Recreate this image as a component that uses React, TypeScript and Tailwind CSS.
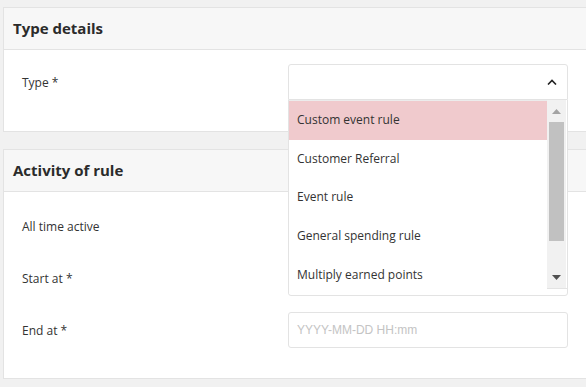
import React from 'react';

const options = [
  'Custom event rule',
  'Customer Referral',
  'Event rule',
  'General spending rule',
  'Multiply earned points',
];

const Card = ({ title, children }: { title: string; children: React.ReactNode }) => (
  <div className="w-[600px] bg-white border border-[#e3e3e3]">
    <div className="h-[42px] bg-[#f7f7f7] border-b border-[#e3e3e3] flex items-center pl-[9px]">
      <h2 className="text-[15px] font-bold text-[#2b2b2b]">{title}</h2>
    </div>
    {children}
  </div>
);

const Row = ({ label, children }: { label: string; children?: React.ReactNode }) => (
  <div className="flex items-center h-[36px]">
    <div className="w-[284px] pl-[18px] pt-[2px] text-[12px] text-[#333]">{label}</div>
    <div className="w-[280px] h-full relative">{children}</div>
  </div>
);

const Dropdown = () => (
  <div className="absolute left-0 top-[36px] z-10 w-[280px] h-[189px] bg-white border border-t-0 border-[#e3e3e3] flex">
    <ul className="flex-1 border-t border-[#ececec]">
      {options.map((o, i) => (
        <li
          key={o}
          className={
            'h-[38.6px] flex items-center pl-2 text-[12px] text-[#333] ' +
            (i === 0 ? 'bg-[#f0cacd]' : 'bg-white')
          }
        >
          {o}
        </li>
      ))}
    </ul>
    {/* scrollbar */}
    <div className="w-[19px] bg-[#f1f1f1] flex flex-col items-center mr-[1px]">
      <div className="h-[22px] flex items-center justify-center">
        <svg width="9" height="5" viewBox="0 0 9 5">
          <polygon points="0,5 4.5,0 9,5" fill="#a3a3a3" />
        </svg>
      </div>
      <div className="w-[15px] h-[119px] bg-[#c1c1c1]" />
      <div className="flex-1" />
      <div className="h-[22px] flex items-center justify-center">
        <svg width="9" height="5" viewBox="0 0 9 5">
          <polygon points="0,0 4.5,5 9,0" fill="#505050" />
        </svg>
      </div>
    </div>
  </div>
);

export default function App() {
  return (
    <div
      className="w-[586px] h-[387px] overflow-hidden bg-[#f1f1f1] pl-[3px] pt-[7px]"
      style={{ fontFamily: '"Open Sans", "Liberation Sans", sans-serif' }}
    >
      <Card title="Type details">
        <div className="pt-[14px] pb-[31px] relative z-10">
          <Row label="Type *">
            <div className="h-full border border-[#e3e3e3] rounded-t-[3px] flex items-center justify-end pr-[10px]">
              <svg width="10" height="6" viewBox="0 0 10 6">
                <polyline points="1,5.5 5,1.5 9,5.5" fill="none" stroke="#222" strokeWidth="1.6" />
              </svg>
            </div>
            <Dropdown />
          </Row>
        </div>
      </Card>

      <div className="h-[17px]" />

      <Card title="Activity of rule">
        <div className="pt-[16px] pb-[30px] flex flex-col gap-[16px]">
          <Row label="All time active" />
          <Row label="Start at *">
            <div className="h-full border border-[#e3e3e3] rounded-[3px]" />
          </Row>
          <Row label="End at *">
            <div className="h-full border border-[#e3e3e3] rounded-[3px] flex items-center pl-2 text-[12px] text-[#c4c4c4] font-['Liberation_Sans',sans-serif]">
              YYYY-MM-DD HH:mm
            </div>
          </Row>
        </div>
      </Card>
    </div>
  );
}
